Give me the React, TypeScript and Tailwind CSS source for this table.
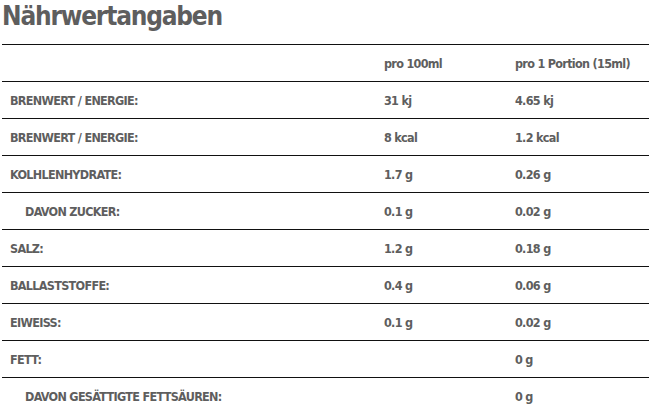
const rows = [
  { label: "BRENWERT / ENERGIE:", a: "31 kj", b: "4.65 kj" },
  { label: "BRENWERT / ENERGIE:", a: "8 kcal", b: "1.2 kcal" },
  { label: "KOLHLENHYDRATE:", a: "1.7 g", b: "0.26 g" },
  { label: "DAVON ZUCKER:", a: "0.1 g", b: "0.02 g", sub: true },
  { label: "SALZ:", a: "1.2 g", b: "0.18 g" },
  { label: "BALLASTSTOFFE:", a: "0.4 g", b: "0.06 g" },
  { label: "EIWEISS:", a: "0.1 g", b: "0.02 g" },
  { label: "FETT:", a: "", b: "0 g" },
  { label: "DAVON GESÄTTIGTE FETTSÄUREN:", a: "", b: "0 g", sub: true },
];

const App = () => {
  return (
    <div className="w-[651px] h-[405px] overflow-hidden bg-white font-['DejaVu_Sans_Condensed',sans-serif] text-[#5e5e5e] font-bold">
      <h1 className="pl-[2px] h-[44px] pt-[1px] text-[26px] leading-[30px] tracking-[-1.2px]">Nährwertangaben</h1>

      <div className="mx-[2px] text-[12.5px] tracking-[-0.7px]">
        <div className="grid grid-cols-[382px_131px_1fr] h-[37px] items-center border-t border-[#111] pt-[3px]">
          <div />
          <div>pro 100ml</div>
          <div>pro 1 Portion (15ml)</div>
        </div>
        {rows.map((row, i) => (
          <div
            key={i}
            className="grid grid-cols-[382px_131px_1fr] h-[37px] items-center border-t border-[#111] pt-[3px]"
          >
            <div className={row.sub ? "pl-[23px]" : "pl-[8px]"}>{row.label}</div>
            <div>{row.a}</div>
            <div>{row.b}</div>
          </div>
        ))}
      </div>
    </div>
  );
};

export default App;
